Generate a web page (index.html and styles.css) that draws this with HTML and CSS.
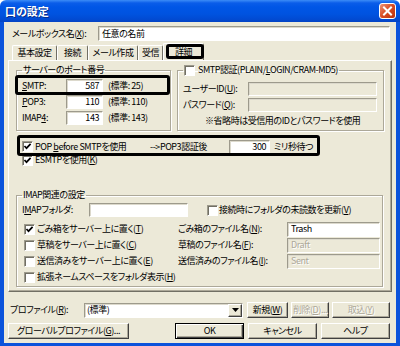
FILE: index.html
```html
<!DOCTYPE html>
<html lang="ja">
<head>
<meta charset="utf-8">
<title>口の設定</title>
<link rel="stylesheet" href="styles.css">
</head>
<body>
<div class="win">
  <div class="titlebar">
    <span class="title">口の設定</span>
    <span class="close"><svg width="11" height="10" viewBox="0 0 11 10"><path d="M2 1.5 L9 8.5 M9 1.5 L2 8.5" stroke="#fff" stroke-width="2" stroke-linecap="square" fill="none"/></svg></span>
  </div>
  <div class="client">
    <div class="namerow">
      <span class="lbl">メールボックス名(<u>X</u>):</span>
      <span class="edit name">任意の名前</span>
    </div>
    <div class="tabs">
      <span class="tab t1">基本設定</span>
      <span class="tab t2">接続</span>
      <span class="tab t3">メール作成</span>
      <span class="tab t4">受信</span>
      <span class="tab sel mark">詳細</span>
    </div>
    <div class="panel">
      <div class="rowA">
        <fieldset class="grp ports">
          <legend><span>サーバーのポート番号</span></legend>
          <div class="prow first mark">
            <span class="plbl"><u>S</u>MTP:</span>
            <span class="edit pnum">587</span>
            <span class="pstd">(標準: 25)</span>
          </div>
          <div class="prow">
            <span class="plbl"><u>P</u>OP3:</span>
            <span class="edit pnum">110</span>
            <span class="pstd">(標準: 110)</span>
          </div>
          <div class="prow">
            <span class="plbl">IMAP<u>4</u>:</span>
            <span class="edit pnum">143</span>
            <span class="pstd">(標準: 143)</span>
          </div>
        </fieldset>
        <fieldset class="grp auth">
          <legend><span class="cb"></span><span>SMTP認証(PLAIN/<u>L</u>OGIN/CRAM-MD5)</span></legend>
          <div class="arow first">
            <span class="albl">ユーザーID(<u>U</u>):</span>
            <span class="edit dis aval"></span>
          </div>
          <div class="arow">
            <span class="albl">パスワード(<u>Q</u>):</span>
            <span class="edit dis aval"></span>
          </div>
          <div class="note">※省略時は受信用のIDとパスワードを使用</div>
        </fieldset>
      </div>
      <div class="poprow mark">
        <span class="chk popchk"><span class="cb"><svg width="9" height="9" viewBox="0 0 9 9"><path d="M1.5 4 L3.5 6.2 L7.6 1.8" stroke="#000" stroke-width="1.7" fill="none"/></svg></span><span>POP <u>b</u>efore SMTPを使用</span></span>
        <span class="arrow">--&gt;POP3認証後</span>
        <span class="edit wait">300</span>
        <span class="ms">ミリ秒待つ</span>
      </div>
      <div class="esmtp">
        <span class="chk"><span class="cb"><svg width="9" height="9" viewBox="0 0 9 9"><path d="M1.5 4 L3.5 6.2 L7.6 1.8" stroke="#000" stroke-width="1.7" fill="none"/></svg></span><span>ESMTPを使用(<u>K</u>)</span></span>
      </div>
      <fieldset class="grp imap">
        <legend><span>IMAP関連の設定</span></legend>
        <div class="irow">
          <span class="ilbl">I<u>M</u>APフォルダ:</span>
          <span class="edit ifolder"></span>
          <span class="chk upd"><span class="cb"></span><span>接続時にフォルダの未読数を更新(<u>V</u>)</span></span>
        </div>
        <div class="igrid">
          <span class="chk icell"><span class="cb"><svg width="9" height="9" viewBox="0 0 9 9"><path d="M1.5 4 L3.5 6.2 L7.6 1.8" stroke="#000" stroke-width="1.7" fill="none"/></svg></span><span>ごみ箱をサーバー上に置く(<u>T</u>)</span></span>
          <span>ごみ箱のファイル名(<u>N</u>):</span>
          <span class="edit fname">Trash</span>

          <span class="chk icell"><span class="cb"></span><span>草稿をサーバー上に置く(<u>C</u>)</span></span>
          <span>草稿のファイル名(<u>F</u>):</span>
          <span class="edit dis fname">Draft</span>

          <span class="chk icell"><span class="cb"></span><span>送信済みをサーバー上に置く(<u>E</u>)</span></span>
          <span>送信済みのファイル名(<u>I</u>):</span>
          <span class="edit dis fname">Sent</span>

          <span class="chk icell wide"><span class="cb"></span><span>拡張ネームスペースをフォルダ表示(<u>H</u>)</span></span>
        </div>
      </fieldset>
    </div>
    <div class="profrow">
      <span class="proflbl">プロファイル(<u>R</u>):</span>
      <span class="combo"><span class="ctext">(標準)</span><span class="drop"><svg width="7" height="4" viewBox="0 0 7 4"><path d="M0 0 H7 L3.5 4 Z" fill="#000"/></svg></span></span>
      <span class="btn b-new">新規(<u>W</u>)</span>
      <span class="btn dis b-del">削除(<u>D</u>)...</span>
      <span class="btn dis b-imp">取込(<u>Y</u>)</span>
    </div>
    <div class="btnrow">
      <span class="btn b-glob">グローバルプロファイル(<u>G</u>)...</span>
      <span class="btn def b-ok">OK</span>
      <span class="btn b-std">キャンセル</span>
      <span class="btn b-std">ヘルプ</span>
    </div>
  </div>
</div>
</body>
</html>
```

FILE: styles.css
```css
* { box-sizing: border-box; }
html, body { margin: 0; padding: 0; background: #fff; }
body {
  font-family: "Noto Sans CJK JP", "Noto Sans", sans-serif;
  font-size: 9px;
  font-weight: 400;
  letter-spacing: -0.45px;
  line-height: 12px;
  color: #000;
  font-feature-settings: "palt";
  white-space: nowrap;
}
u { text-decoration: underline; text-underline-offset: 1px; }

.win { width: 400px; height: 346px; display: flex; flex-direction: column; }

.titlebar {
  height: 22px; flex: none;
  display: flex; align-items: center; justify-content: space-between;
  padding: 0 4px 0 5px;
  border-radius: 6px 6px 0 0;
  background: linear-gradient(#3C8CF7 0, #0A5DE9 3px, #0056E6 7px, #0053E0 14px, #014BD3 19px, #0644C4 22px);
}
.title { color: #fff; font-weight: bold; font-size: 11px; letter-spacing: 0; text-shadow: 1px 1px #0b2d8a; }
.close {
  width: 17px; height: 16px;
  border: 1px solid #fff; border-radius: 3px;
  background: linear-gradient(135deg, #EE9478, #D84B22 50%, #B9330F);
  display: flex; align-items: center; justify-content: center;
}

.client {
  flex: 1;
  background: #ECE9D8;
  border: solid #0B53DB;
  border-width: 0 4px 3px 4px;
  display: flex; flex-direction: column;
}

.edit {
  height: 15px;
  background: #fff;
  border: 1px solid;
  border-color: #9D9A8C #fff #fff #9D9A8C;
  box-shadow: inset 1px 1px #DCD9CC;
  padding: 0 3px;
  display: flex; align-items: center;
  overflow: hidden;
}
.edit.dis { background: #ECE9D8; color: #ACA899; text-shadow: 1px 1px #fff; }

.cb {
  width: 11px; height: 11px; flex: none;
  display: inline-flex; align-items: center; justify-content: center;
  background: #fff;
  border: 1px solid;
  border-color: #9D9A8C #fff #fff #9D9A8C;
  box-shadow: inset 1px 1px #716F64;
}
.chk { display: flex; align-items: center; gap: 2px; }

.mark { position: relative; }
.mark::after {
  content: "";
  position: absolute;
  border: 3px solid #000;
  border-radius: 3px;
  pointer-events: none;
}

/* name row */
.namerow { display: flex; align-items: center; margin-top: 4px; height: 15px; padding-left: 8px; }
.namerow .lbl { width: 86px; }
.edit.name { width: 292px; }

/* tabs */
.tabs { display: flex; align-items: flex-end; height: 17px; margin-top: 2px; padding-left: 8px; }
.tab {
  height: 15px;
  border: 1px solid; border-bottom: none;
  border-color: #fff #716F64 transparent #fff;
  border-radius: 2px 2px 0 0;
  display: flex; align-items: center; justify-content: center;
}
.t1 { width: 45px; }
.t2 { width: 31px; }
.t3 { width: 50px; }
.t4 { width: 25px; }
.tab.sel { width: 41px; height: 17px; }
.tab.sel::after { inset: 0 -1px 1px 2px; }

/* panel */
.panel {
  height: 232px;
  margin: 0 4px;
  border: 1px solid;
  border-color: #fff #716F64 #716F64 #fff;
  box-shadow: inset -1px -1px #ACA899;
  padding: 3px 0 0 7px;
}

.grp {
  margin: 0;
  padding: 0 5px 3px;
  border: 1px solid #ACA899;
  box-shadow: inset 1px 1px #fff, 1px 1px #fff;
  min-width: 0;
}
.grp legend { padding: 0 1px; height: 12px; line-height: 12px; display: flex; align-items: center; gap: 3px; }

.rowA { display: flex; gap: 6px; }
.ports { width: 155px; }
.auth { width: 207px; }

.prow { display: flex; align-items: center; height: 14px; margin-top: 2px; }
.prow.first { margin-top: 3px; }
.prow.mark::after { inset: -4px -5px -2px -7px; }
.plbl { width: 44px; }
.edit.pnum { width: 37px; height: 14px; justify-content: flex-end; }
.pstd { margin-left: 5px; }

.arow { display: flex; align-items: center; height: 14px; margin-top: 2px; }
.arow.first { margin-top: 6px; }
.albl { width: 65px; }
.edit.aval { width: 129px; height: 14px; }
.note { margin: 2px 0 0 22px; line-height: 13px; }

.poprow {
  display: flex; align-items: center;
  height: 15px; width: 303px;
  margin: 8px 0 0 1px;
  padding-left: 5px;
}
.poprow.mark::after { inset: -4px 0 -2px 0; }
.popchk { width: 128px; }
.arrow { width: 79px; }
.edit.wait { width: 41px; height: 14px; justify-content: flex-end; }
.ms { margin-left: 4px; }

.esmtp { display: flex; align-items: center; height: 14px; margin-top: -1px; padding-left: 6px; }

.imap { width: 367px; margin-top: 22px; padding-bottom: 1px; }
.irow { display: flex; align-items: center; height: 14px; margin-top: 2px; }
.ilbl { width: 67px; }
.edit.ifolder { width: 99px; height: 14px; }
.upd { margin-left: 19px; gap: 1px; }

.igrid {
  display: grid;
  grid-template-columns: 156px 109px 93px;
  grid-auto-rows: 16px;
  align-items: center;
  margin-top: 4px;
}
.icell { padding-left: 2px; }
.icell.wide { grid-column: 1 / -1; }
.edit.fname { height: 15px; }

/* bottom */
.profrow { display: flex; align-items: center; height: 16px; margin-top: 10px; padding-left: 6px; }
.proflbl { width: 74px; }
.combo {
  width: 159px; height: 15px;
  display: flex; align-items: stretch;
  background: #fff;
  border: 1px solid;
  border-color: #9D9A8C #fff #fff #9D9A8C;
  box-shadow: inset 1px 1px #DCD9CC;
}
.ctext { flex: 1; padding-left: 2px; display: flex; align-items: center; }
.drop {
  width: 14px;
  display: flex; align-items: center; justify-content: center;
  background: #ECE9D8;
  border: 1px solid;
  border-color: #fff #404040 #404040 #fff;
  box-shadow: inset -1px -1px #ACA899;
}

.btn {
  height: 16px;
  display: flex; align-items: center; justify-content: center;
  background: #ECE9D8;
  border: 1px solid;
  border-color: #fff #404040 #404040 #fff;
  box-shadow: inset -1px -1px #ACA899;
}
.btn.dis { color: #ACA899; text-shadow: 1px 1px #fff; }
.btn.def { border-color: #000; box-shadow: inset 1px 1px #fff, inset -1px -1px #404040, inset -2px -2px #ACA899; }
.b-new { width: 41px; margin-left: 4px; }
.b-del { width: 38px; margin-left: 3px; }
.b-imp { width: 58px; margin-left: 3px; }

.btnrow { display: flex; align-items: center; height: 16px; margin-top: 5px; padding-left: 4px; gap: 4px; }
.b-glob { width: 121px; }
.b-ok { width: 69px; margin-left: 42px; }
.b-std { width: 69px; }
```
